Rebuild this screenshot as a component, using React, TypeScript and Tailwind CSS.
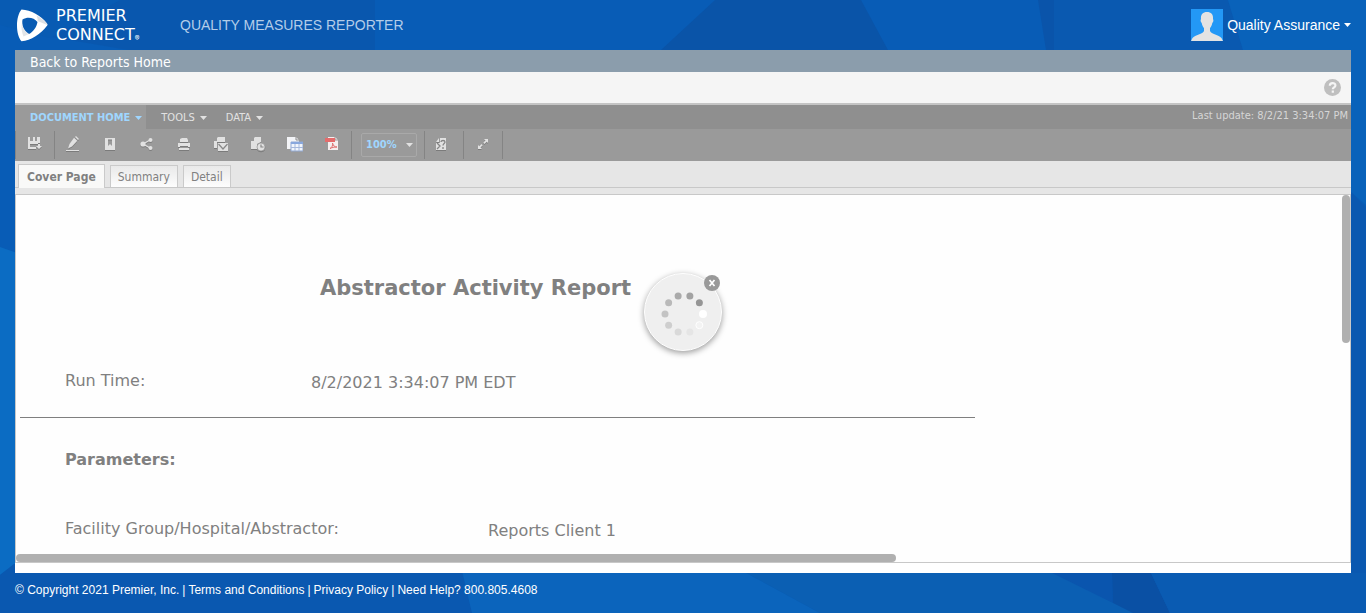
import type { ReactNode } from "react";

const tahoma = "font-['DejaVu_Sans_Condensed','DejaVu_Sans',sans-serif]";

function Backdrop() {
  return (
    <svg className="absolute inset-0 -z-10 h-full w-full" viewBox="0 0 1366 613" preserveAspectRatio="none" aria-hidden="true">
      <rect width="1366" height="613" fill="#085cb6" />
      <path d="M52 37L120 0H375V50H128Z" fill="#0a56ab" opacity=".7" />
      <path d="M0 0H120L50 38L0 25Z" fill="#085bb3" />
      <path d="M715 0H861L888 50H661Z" fill="#0a54a8" />
      <path d="M1038 0H1054V50H1046Z" fill="#0a54aa" />
      <path d="M1054 0H1228L1243 50H1054Z" fill="#0a59b0" />
      <path d="M1228 0H1366V205L1351 192L1243 50Z" fill="#0962ba" />
      <path d="M1351 192L1366 207V613H1351Z" fill="#0a58b0" />
      <path d="M0 247L20 254V560L0 575Z" fill="#0b6cc3" />
      <path d="M0 575L14 564L462 573L472 613H0Z" fill="#0a58b0" />
      <path d="M462 570H741L820 613H472Z" fill="#0b64bc" />
      <path d="M741 570H1052L1133 613H820Z" fill="#0b5fb3" />
      <path d="M1052 573H1112L1113 603Z" fill="#0a55ae" />
      <path d="M1112 573H1151L1170 613H1133L1113 603Z" fill="#0a50a4" />
      <path d="M1151 573H1366V613H1170Z" fill="#0a5bb2" />
    </svg>
  );
}

function Logo() {
  return (
    <a href="#home" aria-label="Premier Connect" className="flex items-center gap-2 text-white">
      <svg width="32" height="33" viewBox="0 0 32 33" aria-hidden="true">
        <path fill="#fff" fillRule="evenodd" d="M5.500.5C15 1 25 6.500 31 14.500c.7.900.7 1.500 0 2.300C25 25 15 31.500 5.500 32.300 2.500 29 1 23 1 16.500S2.500 4 5.500.5ZM6.500 10.500C5.500 16 7.500 21.500 13 25c4-2 7.500-6.500 8.500-12C18 8.500 11.500 7.500 6.500 10.500Z" />
        <path fill="#cfd3d8" d="M20.500 6.500C25 8.500 28.500 11.500 31 14.500l.3 1.500L21.500 12c.5-1.700-.3-3.800-1-5.500Z" opacity=".7" />
        <path fill="#cfd3d8" d="M6 14C6.500 19 8.500 22.500 13 25L7.500 27.500C5.500 23 5 18 6 14Z" opacity=".6" />
      </svg>
      <span className="flex items-end">
        <span className="flex flex-col font-['DejaVu_Sans',sans-serif] text-[16px] leading-[19px]">
          <span>PREMIER</span>
          <span>CONNECT</span>
        </span>
        <span className="font-['Inter',sans-serif] text-[7px]">®</span>
      </span>
    </a>
  );
}

function Glyph({ children }: { children: ReactNode }) {
  return (
    <svg width="16" height="16" viewBox="0 0 16 16" fill="#e1e1e1" className="drop-shadow-[0_1px_0_#7b7b7b]" aria-hidden="true">
      {children}
    </svg>
  );
}

function Caret({ className }: { className: string }) {
  return (
    <svg width="7" height="4" viewBox="0 0 7 4" className={className} aria-hidden="true">
      <path d="M0 0H7L3.500 4Z" fill="currentColor" />
    </svg>
  );
}

const saveIcon = (
  <Glyph>
    <path d="M1 1h2v4h3V1h2v4h2V1h3v6h-2v1H3v3h6v2H1Z" />
    <path d="M11 8h2v2h2l-3 3-3-3h2Z" />
  </Glyph>
);

const tools: { name: string; icon: ReactNode }[] = [
  {
    name: "Edit",
    icon: (
      <Glyph>
        <path d="M10 1l1-1 3 3-1 1Z M9 1.700l3.300 3L7 10.500l-4 2L4.500 8Z M1 14h13v1H1Z" />
      </Glyph>
    ),
  },
  {
    name: "Bookmark",
    icon: (
      <Glyph>
        <path fillRule="evenodd" d="M3 2h10v12H3Z M6 3.500V10l2-2 2 2V3.500Z" />
      </Glyph>
    ),
  },
  {
    name: "Share",
    icon: (
      <Glyph>
        <path d="M4 8l8-4.500M4 8l8 4.500" stroke="#e1e1e1" strokeWidth="1.300" />
        <circle cx="4" cy="8" r="2.600" />
        <circle cx="11.500" cy="4" r="2" />
        <circle cx="11.500" cy="12" r="2" />
      </Glyph>
    ),
  },
  {
    name: "Print",
    icon: (
      <Glyph>
        <path d="M4 6V3l2-1h5l1 2v2Z M2 7h12v4h-2v-1H4v1H2Z M3 12h10v2H3Z" />
      </Glyph>
    ),
  },
  {
    name: "Email",
    icon: (
      <Glyph>
        <path d="M5 1h7v5H4v6H1V5h3V2Z" />
        <path d="M5 7h10v8H5Z" />
        <path d="M5.500 8l4.500 5 4.500-5" fill="none" stroke="#888" strokeWidth="1.200" />
      </Glyph>
    ),
  },
  {
    name: "Schedule",
    icon: (
      <Glyph>
        <path d="M5 1h6v5L7 8v5H1V5h3V2Z" />
        <circle cx="11" cy="11" r="4" stroke="#8a8a8a" strokeWidth=".6" />
        <path d="M11 8.500V11h2.500" fill="none" stroke="#888" strokeWidth="1.200" />
      </Glyph>
    ),
  },
  {
    name: "Export data",
    icon: (
      <svg width="16" height="16" viewBox="0 0 16 16" aria-hidden="true">
        <path d="M0 1h9l3 3v9H0Z" fill="#f3f4f7" />
        <path d="M9 1v3h3" fill="none" stroke="#8d8d8d" />
        <path d="M4 6h12v9H4Z" fill="#f1f5fc" stroke="#91a9d3" />
        <path d="M4 6h12v2H4Z" fill="#88a7dd" />
        <path d="M4 11.500h12M8 8v7M12 8v7" stroke="#a5b8dc" />
      </svg>
    ),
  },
  {
    name: "Export PDF",
    icon: (
      <svg width="16" height="16" viewBox="0 0 16 16" aria-hidden="true">
        <path d="M4 1h7l3 3v10H4Z" fill="#f6eeee" />
        <path d="M11 1v3h3" fill="none" stroke="#999" />
        <path d="M1 2h10v4H1Z" fill="#e46c6c" />
        <path d="M6 12.500c2-1 3-3 2.500-5.500 1 3 2 4 4.500 4-3 0-5 .5-7 1.500Z" fill="none" stroke="#e07070" />
      </svg>
    ),
  },
];

function ToolButton({ name, className, children }: { name: string; className: string; children: ReactNode }) {
  return (
    <button type="button" aria-label={name} className={`flex h-8 shrink-0 items-center justify-center pb-[2px] ${className}`}>
      {children}
    </button>
  );
}

function Divider() {
  return <span className="h-7 w-px shrink-0 bg-[#848484]" />;
}

function MenuBar() {
  return (
    <div className={`flex h-6 items-stretch bg-[#8f8f8f] text-[11px] text-[#e2e2e2] ${tahoma}`}>
      <button type="button" className="flex items-center gap-[5px] bg-[#9a9a9a] pt-[2px] pr-1 pl-[15px] font-bold text-[#9fd6ff]">
        DOCUMENT HOME
        <Caret className="" />
      </button>
      <button type="button" className="flex items-center gap-[5px] pt-[2px] pl-[15px]">
        TOOLS
        <Caret className="" />
      </button>
      <button type="button" className="flex items-center gap-[5px] pt-[2px] pl-[19px]">
        DATA
        <Caret className="" />
      </button>
      <span className="ml-auto pr-[3px] leading-[22px] text-[#d6d6d6]">Last update: 8/2/21 3:34:07 PM</span>
    </div>
  );
}

function ToolBar() {
  return (
    <div className="flex h-8 items-center bg-[#9a9a9a]">
      <Divider />
      <ToolButton name="Save" className="w-[38px]">
        {saveIcon}
      </ToolButton>
      <Divider />
      {tools.map((tool) => (
        <ToolButton key={tool.name} name={tool.name} className="w-[37px] pr-[2px]">
          {tool.icon}
        </ToolButton>
      ))}
      <Divider />
      <div className="relative mr-[7px] ml-[9px] flex items-center">
        <select
          aria-label="Zoom"
          defaultValue="100"
          className={`h-6 w-14 appearance-none rounded-xs border border-[#a9a9a9] pl-1 text-[11px] font-bold text-[#9fd6ff] ${tahoma}`}
        >
          <option value="100">100%</option>
        </select>
        <Caret className="pointer-events-none absolute right-1 text-[#e1e1e1]" />
      </div>
      <Divider />
      <ToolButton name="Document details" className="w-[38px] pr-[6px]">
        <Glyph>
          <path d="M3 6l3-4v4Z M7 2h6v12H3V7h4Z" />
          <path d="M4 7l3 3-3 3M8 6c0-2 4-2 4 0 0 1.500-2 1.500-2 3.500M10 11v2" fill="none" stroke="#858585" strokeWidth="1.300" />
        </Glyph>
      </ToolButton>
      <Divider />
      <ToolButton name="Full screen" className="w-[38px]">
        <Glyph>
          <path d="M9 3h4v4l-1.300-1.300L9.500 8 8.300 6.700l2.200-2.200Z M3 9l1.300 1.300L6.500 8l1.200 1.300-2.200 2.200L7 13H3Z" />
        </Glyph>
      </ToolButton>
      <Divider />
    </div>
  );
}

function Tabs() {
  const idle = "h-[22px] border border-b-0 border-[#cacaca] bg-linear-to-b from-[#e9e9e9] to-[#fdfdfd] px-[7px]";
  return (
    <div className={`h-[34px] border-b border-[#c8c8c8] bg-[#e6e6e6] text-[12px] text-[#808080] ${tahoma}`}>
      <div role="tablist" className="flex h-[27px] items-end gap-[5px] border-b border-[#c8c8c8] pl-[3px]">
        <button type="button" role="tab" aria-selected="true" className="-mb-px h-6 border border-b-0 border-[#cacaca] bg-[#f9f9f8] px-2 font-bold">
          Cover Page
        </button>
        <button type="button" role="tab" aria-selected="false" className={idle}>
          Summary
        </button>
        <button type="button" role="tab" aria-selected="false" className={idle}>
          Detail
        </button>
      </div>
    </div>
  );
}

const dots = ["#959595", "#a2a2a2", "#aaaaaa", "#b9b9b9", "#c3c3c3", "#cecece", "#d9d9d9", "#e5e5e5", "#f3f3f3", "#ffffff"];

function Loader() {
  return (
    <div role="status" aria-label="Loading" className="absolute top-[78px] left-1/2 size-[78px] -translate-x-1/2 rounded-full border border-white bg-[#efefef] shadow-[0_2px_6px_rgba(0,0,0,0.4)]">
      <svg className="h-full w-full" viewBox="0 0 76 76" aria-hidden="true">
        {dots.map((fill, i) => {
          const angle = ((-36 - i * 36) * Math.PI) / 180;
          return (
            <circle
              key={fill}
              cx={39 + 19 * Math.cos(angle)}
              cy={40 + 19 * Math.sin(angle)}
              r={i === 9 ? 4 : 3.5}
              fill={fill}
              stroke={i === 8 ? "#fff" : "none"}
            />
          );
        })}
      </svg>
      <button type="button" aria-label="Cancel" className="absolute top-px right-px size-4 rounded-full bg-[#999]">
        <svg width="16" height="16" viewBox="0 0 16 16" aria-hidden="true">
          <path d="M5.500 5l5 6M10.500 5l-5 6" stroke="#fff" strokeWidth="1.700" />
        </svg>
      </button>
    </div>
  );
}

function Report() {
  return (
    <section className="relative flex-1 overflow-hidden border border-t-0 border-[#c8c8c8] bg-[#fefefe] pb-3 font-['DejaVu_Sans',sans-serif] text-[16px] leading-6 text-[#808080]">
      <h1 className="pt-[77px] pl-[304px] text-[21px] leading-8 font-bold">Abstractor Activity Report</h1>
      <dl className="mt-[65px] flex pl-[49px]">
        <dt className="w-[246px]">Run Time:</dt>
        <dd className="pt-[2px]">8/2/2021 3:34:07 PM EDT</dd>
      </dl>
      <hr className="mt-[22px] ml-1 w-[955px] max-w-full border-[#7f7f7f]" />
      <h2 className="mt-[30px] pl-[49px] font-bold">Parameters:</h2>
      <dl className="mt-[45px] flex pl-[49px]">
        <dt className="w-[423px]">Facility Group/Hospital/Abstractor:</dt>
        <dd className="pt-[2px]">Reports Client 1</dd>
      </dl>
      <Loader />
      <span className="absolute top-0 right-0 h-[148px] w-2 rounded-full bg-[#b0b0b0]" />
      <span className="absolute bottom-0 left-0 h-2 w-[66%] rounded-full bg-[#b0b0b0]" />
    </section>
  );
}

export default function App() {
  return (
    <div className="relative isolate flex min-h-screen flex-col font-['Liberation_Sans',Arial,sans-serif]">
      <Backdrop />
      <header className="flex h-[50px] items-center pr-[15px] pl-4">
        <div className="w-[164px]">
          <Logo />
        </div>
        <span className="text-[14px] text-[#b3cde9]">QUALITY MEASURES REPORTER</span>
        <button type="button" className="ml-auto flex items-center gap-1 text-[14px] text-white">
          <svg width="32" height="32" viewBox="0 0 32 32" aria-hidden="true">
            <rect width="32" height="32" fill="#2398f6" />
            <path d="M16 3c4 0 6.500 2.500 6 7 .7 1 .5 3-.7 4-.5 2.500-1.300 4-2.300 5v3c1 3 9 4 11.500 7l1.500 3H0l1.500-3C4 26 12 25 13 22v-3c-1-1-1.800-2.500-2.300-5-1.200-1-1.400-3-.7-4-.5-4.500 2-7 6-7Z" fill="#e3e3e3" />
          </svg>
          Quality Assurance
          <Caret className="" />
        </button>
      </header>
      <main className="mx-[15px] flex flex-1 flex-col bg-white pb-[10px]">
        <nav className={`flex h-[22px] items-center bg-[#8b9dac] pt-[2px] pl-[15px] text-[14px] text-white ${tahoma}`}>
          <a href="#reports">Back to Reports Home</a>
        </nav>
        <div className="flex h-[33px] items-center justify-end border-b-2 border-[#c4c4c4] bg-[#f5f5f5] pr-[10px]">
          <button type="button" aria-label="Help">
            <svg width="17" height="17" viewBox="0 0 17 17" aria-hidden="true">
              <circle cx="8.500" cy="8.500" r="8.500" fill="#bfbfbf" />
              <path d="M5.800 6.800c0-3.400 5.600-3.400 5.600-.4 0 2-2.600 1.900-2.600 3.900M8.800 11.500v2.200" fill="none" stroke="#f5f5f5" strokeWidth="2.200" />
            </svg>
          </button>
        </div>
        <MenuBar />
        <ToolBar />
        <Tabs />
        <Report />
      </main>
      <footer className="flex h-10 items-start gap-[3px] px-[15px] pt-2 text-[12px] leading-[18px] text-white">
        <span>© Copyright 2021 Premier, Inc.</span>
        <span>|</span>
        <a href="#terms">Terms and Conditions</a>
        <span>|</span>
        <a href="#privacy">Privacy Policy</a>
        <span>|</span>
        <span>Need Help? 800.805.4608</span>
      </footer>
    </div>
  );
}
